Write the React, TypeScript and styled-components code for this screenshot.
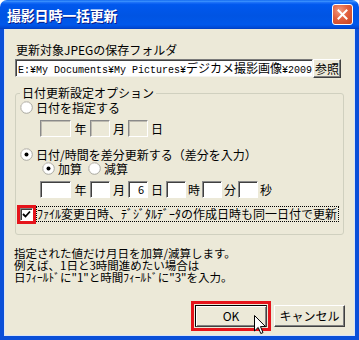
import React from "react";
import styled, { createGlobalStyle } from "styled-components";

const GlobalStyle = createGlobalStyle`
  html, body { margin: 0; padding: 0; background: #ffffff; }
  body { font-family: "Noto Sans CJK JP", "Noto Sans", sans-serif; font-size: 12px; color: #000; }
  * { box-sizing: border-box; }
`;

const Window = styled.div`
  position: relative;
  width: 359px;
  height: 340px;
  display: flex;
  flex-direction: column;
`;

const TitleBar = styled.div`
  height: 29px;
  flex: none;
  border-radius: 7px 7px 0 0;
  background: linear-gradient(
    to bottom,
    #0a60ec 0%,
    #3d95ff 4%,
    #1a6ef7 9%,
    #0058ee 16%,
    #0054e3 55%,
    #0058eb 85%,
    #004ad6 95%,
    #003ec0 100%
  );
  display: flex;
  align-items: center;
  justify-content: space-between;
  padding: 0 6px 0 7px;
`;

const Title = styled.span`
  color: #ffffff;
  font-family: "Noto Sans CJK JP", sans-serif;
  font-weight: bold;
  font-size: 14px;
  line-height: 16px;
  letter-spacing: -0.2px;
  text-shadow: 1px 1px 0 #0a1c8a;
`;

const CloseButton = styled.div`
  width: 21px;
  height: 21px;
  border: 1px solid #ffffff;
  border-radius: 3px;
  background: radial-gradient(circle at 35% 30%, #f39a7f 0%, #e2603f 45%, #c8431f 100%);
  display: flex;
  align-items: center;
  justify-content: center;
`;

const Frame = styled.div`
  flex: 1;
  display: flex;
  flex-direction: column;
  background: #ece9d8;
  border-style: solid;
  border-color: #0a4fd8;
  border-width: 0 4px 4px 4px;
  box-shadow: inset 1px 0 0 #d8e4f8, inset -1px 0 0 #d8e4f8, inset 0 -1px 0 #d8e4f8;
  padding: 14px 11px 0 11px;
`;

const Label = styled.div`
  height: 14px;
  line-height: 14px;
  padding-left: 1px;
`;

const PathRow = styled.div`
  display: flex;
  align-items: flex-start;
  margin-top: 2px;
`;

const PathInput = styled.div`
  width: 298px;
  height: 18px;
  background: #ffffff;
  border-top: 1px solid #7a7a7a;
  border-left: 1px solid #7a7a7a;
  border-right: 1px solid #f4f4f0;
  border-bottom: 1px solid #f4f4f0;
  box-shadow: inset 1px 1px 0 #404040;
  overflow: hidden;
  white-space: nowrap;
  padding-left: 2px;
  line-height: 16px;
`;

const Mono = styled.span`
  font-family: "Liberation Mono", "DejaVu Sans Mono", monospace;
  font-size: 10px;
`;

const Wide = styled.span`
  font-size: 12px;
`;

const Button = styled.div<{ $w: number; $h: number; $default?: boolean }>`
  width: ${(p) => p.$w}px;
  height: ${(p) => p.$h}px;
  flex: none;
  display: flex;
  align-items: center;
  justify-content: center;
  background: #ece9d8;
  border: 1px solid ${(p) => (p.$default ? "#000000" : "#ffffff")};
  border-right-color: #404040;
  border-bottom-color: #404040;
  box-shadow: ${(p) =>
    p.$default
      ? "inset 1px 1px 0 #ffffff, inset -1px -1px 0 #808080"
      : "inset -1px -1px 0 #808080"};
  line-height: 14px;
`;

const Group = styled.fieldset`
  margin: 8px 0 0 0;
  padding: 0 6px 11px 4px;
  border: 1px solid #d0d0bf;
  border-radius: 3px;
  min-width: 0;
`;

const Legend = styled.legend`
  padding: 0 2px;
  margin-left: 0;
  line-height: 14px;
  height: 14px;
`;

const RadioRow = styled.div<{ $top: number; $indent?: number }>`
  display: flex;
  align-items: center;
  height: 13px;
  margin-top: ${(p) => p.$top}px;
  padding-left: ${(p) => p.$indent || 0}px;
  line-height: 13px;
`;

const RadioItem = styled.span<{ $w?: number }>`
  display: inline-flex;
  align-items: center;
  gap: 3px;
  width: ${(p) => (p.$w ? `${p.$w}px` : "auto")};
`;

const DateRow = styled.div<{ $top: number }>`
  display: flex;
  align-items: center;
  height: 17px;
  margin-top: ${(p) => p.$top}px;
  padding-left: 20px;
`;

const Box = styled.div<{ $w: number; $disabled?: boolean }>`
  width: ${(p) => p.$w}px;
  height: 17px;
  flex: none;
  background: ${(p) => (p.$disabled ? "#ece9d8" : "#ffffff")};
  border-top: 1px solid #8a8a8a;
  border-left: 1px solid #8a8a8a;
  border-right: 1px solid #ffffff;
  border-bottom: 1px solid #ffffff;
  box-shadow: ${(p) => (p.$disabled ? "inset 1px 1px 0 #bdbab0" : "inset 1px 1px 0 #404040")};
  text-align: right;
  padding-right: 3px;
  font-size: 11px;
  line-height: 15px;
`;

const Unit = styled.span<{ $w: number }>`
  width: ${(p) => p.$w}px;
  flex: none;
  text-align: center;
  line-height: 14px;
`;

const CheckRow = styled.div`
  display: flex;
  align-items: center;
  height: 18px;
  margin-top: 7px;
  margin-left: -3px;
`;

const Highlight = styled.span<{ $pad: number }>`
  display: inline-flex;
  flex: none;
  border: 3px solid #e5141b;
  padding: ${(p) => p.$pad}px;
`;

const CheckBox = styled.span`
  width: 13px;
  height: 13px;
  display: flex;
  align-items: center;
  justify-content: center;
  background: #ffffff;
  border-top: 1px solid #808080;
  border-left: 1px solid #808080;
  border-right: 1px solid #ffffff;
  border-bottom: 1px solid #ffffff;
  box-shadow: inset 1px 1px 0 #404040;
`;

const FocusLabel = styled.span`
  margin-left: 0;
  outline: 1px dotted #000;
  outline-offset: -1px;
  padding: 0 2px 0 1px;
  line-height: 16px;
  height: 16px;
  white-space: nowrap;
`;

const Description = styled.div`
  margin-top: 12px;
  margin-left: -1px;
  font-size: 11.5px;
  line-height: 12px;
  white-space: nowrap;
`;

const ButtonRow = styled.div`
  display: flex;
  justify-content: flex-end;
  align-items: center;
  gap: 3px;
  margin-top: 18px;
  margin-right: -1px;
`;

const Cursor = styled.svg`
  position: absolute;
  left: 254px;
  top: 315px;
`;

const Radio = ({ checked }: { checked?: boolean }) => (
  <svg width="13" height="13" viewBox="0 0 13 13">
    <circle cx="6.5" cy="6.5" r="5.8" fill="#ffffff" stroke="#a8a8a0" strokeWidth="1" />
    <path d="M2.4 10.2 A5.2 5.2 0 0 1 10.2 2.4" fill="none" stroke="#d4d0c8" strokeWidth="1" />
    {checked && <circle cx="6.5" cy="6.5" r="2" fill="#000000" />}
  </svg>
);

export default function App() {
  return (
    <>
      <GlobalStyle />
      <Window>
        <TitleBar>
          <Title>撮影日時一括更新</Title>
          <CloseButton>
            <svg width="11" height="11" viewBox="0 0 11 11">
              <path d="M1.5 1.5 L9.5 9.5 M9.5 1.5 L1.5 9.5" stroke="#ffffff" strokeWidth="2" strokeLinecap="square" />
            </svg>
          </CloseButton>
        </TitleBar>
        <Frame>
          <Label>更新対象JPEGの保存フォルダ</Label>
          <PathRow>
            <PathInput>
              <Mono>E:¥My Documents¥My Pictures¥</Mono>
              <Wide>デジカメ撮影画像</Wide>
              <Mono>¥2009</Mono>
            </PathInput>
            <Button $w={28} $h={19}>参照</Button>
          </PathRow>
          <Group>
            <Legend>日付更新設定オプション</Legend>
            <RadioRow $top={1}>
              <RadioItem>
                <Radio />
                日付を指定する
              </RadioItem>
            </RadioRow>
            <DateRow $top={6}>
              <Box $w={31} $disabled />
              <Unit $w={19}>年</Unit>
              <Box $w={20} $disabled />
              <Unit $w={18}>月</Unit>
              <Box $w={20} $disabled />
              <Unit $w={18}>日</Unit>
            </DateRow>
            <RadioRow $top={11}>
              <RadioItem>
                <Radio checked />
                日付/時間を差分更新する（差分を入力）
              </RadioItem>
            </RadioRow>
            <RadioRow $top={1} $indent={22}>
              <RadioItem $w={46}>
                <Radio checked />
                加算
              </RadioItem>
              <RadioItem>
                <Radio />
                減算
              </RadioItem>
            </RadioRow>
            <DateRow $top={6}>
              <Box $w={31} />
              <Unit $w={19}>年</Unit>
              <Box $w={20} />
              <Unit $w={18}>月</Unit>
              <Box $w={20}>6</Box>
              <Unit $w={18}>日</Unit>
              <Box $w={20} />
              <Unit $w={16}>時</Unit>
              <Box $w={20} />
              <Unit $w={16}>分</Unit>
              <Box $w={20} />
              <Unit $w={16}>秒</Unit>
            </DateRow>
            <CheckRow>
              <Highlight $pad={0}>
                <CheckBox>
                  <svg width="9" height="9" viewBox="0 0 9 9">
                    <path d="M1 4 L3.5 6.5 L8 1.5" fill="none" stroke="#000" strokeWidth="1.8" />
                  </svg>
                </CheckBox>
              </Highlight>
              <FocusLabel>ﾌｧｲﾙ変更日時、ﾃﾞｼﾞﾀﾙﾃﾞｰﾀの作成日時も同一日付で更新</FocusLabel>
            </CheckRow>
          </Group>
          <Description>
            指定された値だけ月日を加算/減算します。
            <br />
            例えば、1日と3時間進めたい場合は
            <br />
            日ﾌｨｰﾙﾄﾞに"1"と時間ﾌｨｰﾙﾄﾞに"3"を入力。
          </Description>
          <ButtonRow>
            <Highlight $pad={1}>
              <Button $w={72} $h={22} $default>
                OK
              </Button>
            </Highlight>
            <Button $w={71} $h={22}>キャンセル</Button>
          </ButtonRow>
        </Frame>
        <Cursor width="13" height="20" viewBox="0 0 13 20">
          <path d="M0.5 0.5 L0.5 16 L4.2 12.4 L6.8 18.5 L9 17.6 L6.5 11.6 L11.5 11.6 Z" fill="#ffffff" stroke="#000000" strokeWidth="1" />
        </Cursor>
      </Window>
    </>
  );
}
